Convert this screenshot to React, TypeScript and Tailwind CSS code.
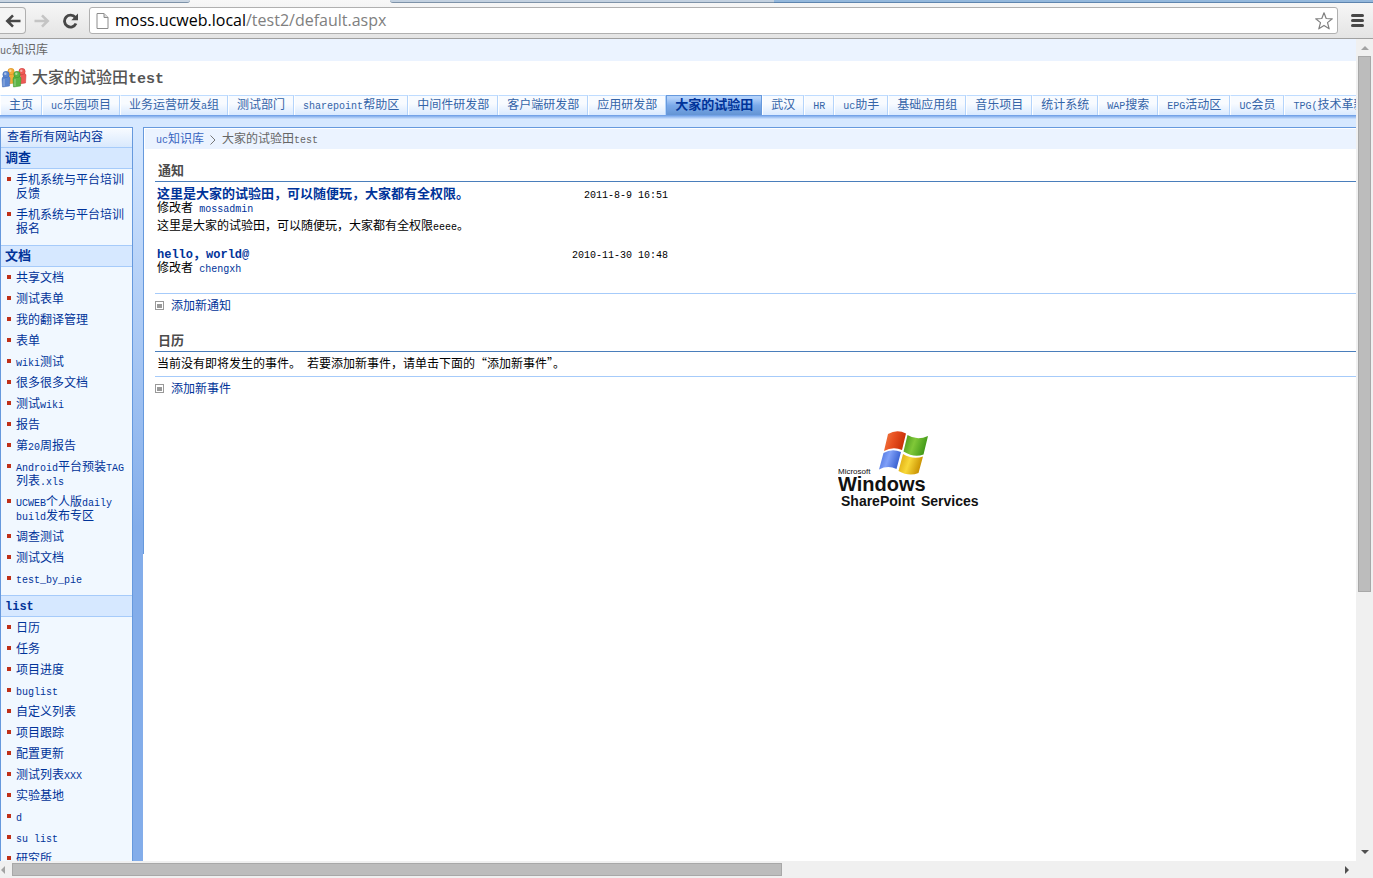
import React from 'react';

function Mixed({ text, latin = 'text-[10px]' }: { text: string; latin?: string }) {
  const parts = text.match(/[\x20-\x7e]+|[“”]|[^\x20-\x7e“”]+/g) ?? [];
  return (
    <>
      {parts.map((p, i) => {
        if (/^[“”]/.test(p)) {
          return <span key={i} className="font-['Noto_Sans_CJK_SC',sans-serif] leading-none">{p}</span>;
        }
        if (/^[\x20-\x7e]/.test(p)) {
          return <span key={i} className={`font-['Liberation_Mono',monospace] leading-none ${latin}`}>{p}</span>;
        }
        return <React.Fragment key={i}>{p}</React.Fragment>;
      })}
    </>
  );
}

const tabs = [
  '主页', 'uc乐园项目', '业务运营研发a组', '测试部门', 'sharepoint帮助区', '中间件研发部', '客户端研发部',
  '应用研发部', '大家的试验田', '武汉', 'HR', 'uc助手', '基础应用组', '音乐项目', '统计系统', 'WAP搜索',
  'EPG活动区', 'UC会员', 'TPG(技术革新组)',
];

const sections = [
  { title: '调查', items: ['手机系统与平台培训反馈', '手机系统与平台培训报名'] },
  {
    title: '文档',
    items: [
      '共享文档', '测试表单', '我的翻译管理', '表单', 'wiki测试', '很多很多文档', '测试wiki', '报告', '第20周报告',
      'Android平台预装TAG列表.xls', 'UCWEB个人版daily build发布专区', '调查测试', '测试文档', 'test_by_pie',
    ],
  },
  {
    title: 'list',
    items: [
      '日历', '任务', '项目进度', 'buglist', '自定义列表', '项目跟踪', '配置更新', '测试列表XXX', '实验基地', 'd',
      'su list', '研究所',
    ],
  },
];

function BrowserBar() {
  return (
    <header className="h-[39px] shrink-0 border-b border-[#a0a0a0] bg-gradient-to-b from-[#f8f8f8] to-[#e4e4e4]">
      <div className="flex h-[3px] justify-between">
        <div className="h-[3px] w-[190px] rounded-br border-b border-[#7d92a8] bg-[#c9d5e2]" />
        <div className="ml-[200px] h-[3px] w-[384px] shrink-0 rounded-bl border-b border-[#7d92a8] bg-[#c3d1e0]" />
        <div className="h-[3px] grow border-b border-[#5d84ae] bg-[#94b8dc]" />
      </div>
      <div className="flex h-[35px] items-center">
        <button aria-label="Back" className="flex h-[27px] w-[26px] items-center justify-center rounded-r border border-l-0 border-[#b0b0b0] bg-[#f4f4f4]">
          <svg width="16" height="14" viewBox="0 0 16 14" fill="none" stroke="#474747" strokeWidth="2.6">
            <path d="M15.500 7H3M8 1.300 2.300 7 8 12.700" />
          </svg>
        </button>
        <button aria-label="Forward" className="ml-2 flex h-[26px] w-4 items-center justify-center">
          <svg width="16" height="14" viewBox="0 0 16 14" fill="none" stroke="#c4c4c4" strokeWidth="2.600">
            <path d="M.500 7H13M8 1.300 13.700 7 8 12.700" />
          </svg>
        </button>
        <button aria-label="Reload" className="ml-3 flex h-[26px] w-[17px] items-center justify-center">
          <svg width="17" height="16" viewBox="0 0 17 16">
            <path d="M13.300 4.400A6 6 0 1 0 14 10.500" fill="none" stroke="#474747" strokeWidth="2.800" />
            <path d="M16 .500V7.200H9.300Z" fill="#474747" />
          </svg>
        </button>
        <div className="ml-[10px] flex h-[27px] grow items-center rounded-[3px] border border-[#b0b0b0] bg-white pr-1 pl-[6px]">
          <svg width="13" height="16" viewBox="0 0 13 16" fill="#fff" stroke="#8c8c8c">
            <path d="M1 .500H8L12 4.500V15.500H1Z" />
            <path d="M8 .500V4.500H12" fill="#ddd" />
          </svg>
          <div className="ml-[6px] grow pb-[2px] font-['Open_Sans','Noto_Sans',sans-serif] text-base leading-6 text-[#808080]">
            <span className="text-black">moss.ucweb.local</span>/test2/default.aspx
          </div>
          <button aria-label="Bookmark">
            <svg width="18" height="18" viewBox="0 0 18 18" fill="#fff" stroke="#808080" strokeWidth="1.200" strokeLinejoin="round">
              <path d="M9 .800 11.200 6.500 17.300 6.800 12.500 10.600 14.200 16.800 9 13.400 3.800 16.800 5.500 10.600.700 6.800 6.800 6.500Z" />
            </svg>
          </button>
        </div>
        <button aria-label="Menu" className="flex w-[35px] flex-col items-center gap-[2px] pl-1">
          <span className="h-[3px] w-[13px] rounded-sm bg-[#474747]" />
          <span className="h-[3px] w-[13px] rounded-sm bg-[#474747]" />
          <span className="h-[3px] w-[13px] rounded-sm bg-[#474747]" />
        </button>
      </div>
    </header>
  );
}

function PeopleIcon() {
  const people = [
    { x: 6, y: 0, c: '#f4ac38', d: '#d08818' },
    { x: 17, y: 0, c: '#ee5a55', d: '#c83838' },
    { x: 1, y: 3, c: '#5b86d0', d: '#3c66b4' },
    { x: 12, y: 3, c: '#5cb545', d: '#38922a' },
  ];
  return (
    <svg width="26" height="20" viewBox="0 0 26 20">
      {people.map((p) => (
        <g key={p.x} fill={p.c} stroke={p.d} strokeWidth=".5">
          <path d={`M${p.x} ${p.y + 8}Q${p.x} ${p.y + 5} ${p.x + 4} ${p.y + 5}T${p.x + 8} ${p.y + 7}L${p.x + 7.500} ${p.y + 15}L${p.x + 0.500} ${p.y + 16}Z`} />
          <circle cx={p.x + 4} cy={p.y + 3.500} r="3.200" />
          <circle cx={p.x + 3.300} cy={p.y + 2.800} r="1.200" fill="#fff" fillOpacity=".5" stroke="none" />
          <path d={`M${p.x + 2} ${p.y + 8}V${p.y + 15}`} stroke="#fff" strokeOpacity=".4" strokeWidth="1" />
        </g>
      ))}
    </svg>
  );
}

function Tabs() {
  return (
    <nav className="flex h-5 shrink-0 overflow-hidden text-[#3464a8]">
      {tabs.map((t) => {
        const active = t === '大家的试验田';
        return (
          <a
            key={t}
            href="#"
            className={
              active
                ? 'h-5 shrink-0 border-x border-t border-[#6699dd] bg-gradient-to-b from-[#b4d2fa] from-10% via-[#7aa9ea] via-50% to-[#6495d4] px-2 text-[13px] leading-[18px] font-bold text-[#003399]'
                : 'h-5 shrink-0 border-t border-r border-l border-t-[#bfdcff] border-r-[#b4d4fb] border-l-white bg-gradient-to-b from-[#f8fbff] from-40% to-[#d9eaff] px-2 leading-[18px]'
            }
          >
            <Mixed text={t} />
          </a>
        );
      })}
    </nav>
  );
}

function Sidebar() {
  return (
    <aside className="w-[133px] shrink-0 border-x border-t border-[#6699dd] bg-[#f1f8ff] text-[#003399]">
      <a href="#" className="block h-[19px] border-t border-white bg-gradient-to-b from-[#f6faff] to-[#d9e9fd] pl-[6px] leading-[17px]">
        查看所有网站内容
      </a>
      {sections.map((s) => (
        <section key={s.title}>
          <h2 className="h-[22px] border-y border-[#a6cbfa] bg-[#d6e8ff] pl-1 text-[13px] leading-5 font-bold">
            <Mixed text={s.title} latin="text-[12px]" />
          </h2>
          <ul className="pb-[6px]">
            {s.items.map((it) => (
              <li key={it} className="flex pt-1 pb-[3px] pl-[6px]">
                <span className="mt-1 mr-[5px] size-1 shrink-0 bg-[#c03018]" />
                <a href="#" className="w-[113px] leading-[14px]"><Mixed text={it} /></a>
              </li>
            ))}
          </ul>
        </section>
      ))}
    </aside>
  );
}

function AddLink({ label }: { label: string }) {
  return (
    <a href="#" className="flex h-[23px] items-center gap-[7px] text-[#003399]">
      <svg width="9" height="9" viewBox="0 0 9 9" shapeRendering="crispEdges">
        <path d="M.500.500H8.500V8.500H.500Z" fill="#fff" stroke="#999" />
        <path d="M2 3H7V7H2Z" fill="#999" />
      </svg>
      {label}
    </a>
  );
}

function Announcement({ title, date, author, body }: { title: string; date: string; author: string; body?: string }) {
  return (
    <article className="pl-[2px] leading-[14px]">
      <div className="flex h-[14px] w-[511px] justify-between">
        <a href="#" className="text-[13px] font-bold text-[#003399]"><Mixed text={title} latin="text-[12px]" /></a>
        <time><Mixed text={date} /></time>
      </div>
      <p>修改者 <a href="#" className="ml-[3px] text-[#003399]"><Mixed text={author} /></a></p>
      {body && <p className="mt-1"><Mixed text={body} /></p>}
    </article>
  );
}

function Logo() {
  return (
    <svg width="146" height="80" viewBox="0 0 146 80" role="img" aria-label="Microsoft Windows SharePoint Services">
      <defs>
        <linearGradient id="r" x2="1" y2=".3"><stop stopColor="#f08048" /><stop offset=".5" stopColor="#e85020" /><stop offset="1" stopColor="#c83008" /></linearGradient>
        <linearGradient id="g" x2="1" y2=".3"><stop stopColor="#409018" /><stop offset=".5" stopColor="#80c838" /><stop offset="1" stopColor="#409818" /></linearGradient>
        <linearGradient id="b" x2="1" y2=".3"><stop stopColor="#4068d8" /><stop offset=".5" stopColor="#80a0f8" /><stop offset="1" stopColor="#3860d0" /></linearGradient>
        <linearGradient id="y" x2="1" y2=".3"><stop stopColor="#d8a008" /><stop offset=".5" stopColor="#f8d838" /><stop offset="1" stopColor="#c89000" /></linearGradient>
      </defs>
      <path d="M50 3Q59-2 68 2.500L64 19Q55 15 46 20Z" fill="url(#r)" />
      <path d="M69.500 4Q79 10 90 5L85.500 23.500Q76 27 65.500 20.500Z" fill="url(#g)" />
      <path d="M45.500 22Q54 17 63 21L58.500 38Q50 34 41 38.500Z" fill="url(#b)" />
      <path d="M65 23Q75 29 85 25.500L80.500 42Q71 46 60.500 40Z" fill="url(#y)" />
      <g fill="#111" className="font-['Liberation_Sans',sans-serif]">
        <text x="0" y="43" fontSize="8">Microsoft</text>
        <text x="0" y="60" fontSize="20" fontWeight="700">Windows</text>
        <text x="3" y="75" fontSize="14" fontWeight="700">SharePoint</text>
        <text x="83" y="75" fontSize="14" fontWeight="700">Services</text>
      </g>
    </svg>
  );
}

function SectionTitle({ children }: { children: string }) {
  return (
    <h2 className="h-[21px] border-b border-[#4a7ebb] pl-[3px] text-[13px] leading-5 font-bold text-[#4c4c4c]">{children}</h2>
  );
}

function Main() {
  return (
    <main className="min-w-0 grow border-t border-[#6699dd] bg-white text-black">
      <div className="flex">
        <div className="h-[426px] w-px shrink-0 bg-[#6699dd]" />
        <div className="min-w-0 grow">
          <div className="h-[21px] border-t border-l border-white bg-[#ebf3ff] pl-[11px] leading-5 text-[#666]">
            <a href="#" className="text-[#3966bf]"><Mixed text="uc知识库" /></a>
            <svg className="mx-[6px] inline" width="6" height="10" viewBox="0 0 6 10" fill="none" stroke="#777"><path d="M.500.500 5 5 .500 9.500" /></svg>
            <Mixed text="大家的试验田test" />
          </div>
          <div className="pt-3 pl-[11px]">
            <SectionTitle>通知</SectionTitle>
            <div className="flex flex-col gap-[14px] pt-[5px] pb-[18px]">
              <Announcement title="这里是大家的试验田，可以随便玩，大家都有全权限。" date="2011-8-9 16:51" author="mossadmin" body="这里是大家的试验田，可以随便玩，大家都有全权限eeee。" />
              <Announcement title="hello，world@" date="2010-11-30 10:48" author="chengxh" />
            </div>
            <div className="border-t border-[#a6cbfa]"><AddLink label="添加新通知" /></div>
            <div className="pt-[14px]"><SectionTitle>日历</SectionTitle></div>
            <p className="h-6 pl-[2px] leading-[24px]">
              当前没有即将发生的事件。<span className="ml-[6px]"><Mixed text="若要添加新事件，请单击下面的“添加新事件”。" /></span>
            </p>
            <div className="border-t border-[#a6cbfa]"><AddLink label="添加新事件" /></div>
            <div className="mt-[31px] ml-[683px]"><Logo /></div>
          </div>
        </div>
      </div>
    </main>
  );
}

function Arrow({ d, color }: { d: string; color: string }) {
  return <svg width="8" height="8" viewBox="0 0 8 8" className="shrink-0"><path d={d} fill={color} /></svg>;
}

export default function App() {
  return (
    <div className="flex h-screen flex-col overflow-hidden bg-white font-['Liberation_Sans','Noto_Sans_CJK_SC',sans-serif] text-[12px]">
      <BrowserBar />
      <div className="flex min-h-0 grow">
        <div className="flex min-w-0 grow flex-col overflow-hidden">
          <div className="h-[22px] shrink-0 bg-[#ebf3ff] leading-[22px] text-[#666]"><Mixed text="uc知识库" /></div>
          <div className="flex h-[34px] shrink-0 items-center gap-[5px] pl-[1px]">
            <PeopleIcon />
            <h1 className="text-[16px] leading-6 font-medium text-[#555]"><Mixed text="大家的试验田test" latin="text-[15px] font-bold" /></h1>
          </div>
          <Tabs />
          <div className="h-3 shrink-0 bg-gradient-to-b from-[#6699e4] to-[#d6e8ff] to-35%" />
          <div className="flex min-h-0 grow overflow-hidden bg-gradient-to-b from-[#d6e8ff] to-[#83adea] to-[400px]">
            <Sidebar />
            <div className="w-[10px] shrink-0" />
            <Main />
          </div>
        </div>
        <div className="flex w-[17px] shrink-0 flex-col items-center bg-[#f0f0f0] pt-[5px] pb-[5px]">
          <Arrow d="M0 6 4 2 8 6Z" color="#a3a3a3" />
          <div className="mt-1 h-[66%] w-[13px] border border-[#a8a8a8] bg-[#bcbcbc]" />
          <div className="grow" />
          <Arrow d="M0 2 4 6 8 2Z" color="#505050" />
        </div>
      </div>
      <div className="flex h-[17px] shrink-0 items-center bg-[#f0f0f0] pr-[22px]">
        <Arrow d="M5 0 1 4 5 8Z" color="#a3a3a3" />
        <div className="ml-1 h-[13px] w-[57%] border border-[#a8a8a8] bg-[#bcbcbc]" />
        <div className="grow" />
        <Arrow d="M2 0 6 4 2 8Z" color="#505050" />
      </div>
    </div>
  );
}
